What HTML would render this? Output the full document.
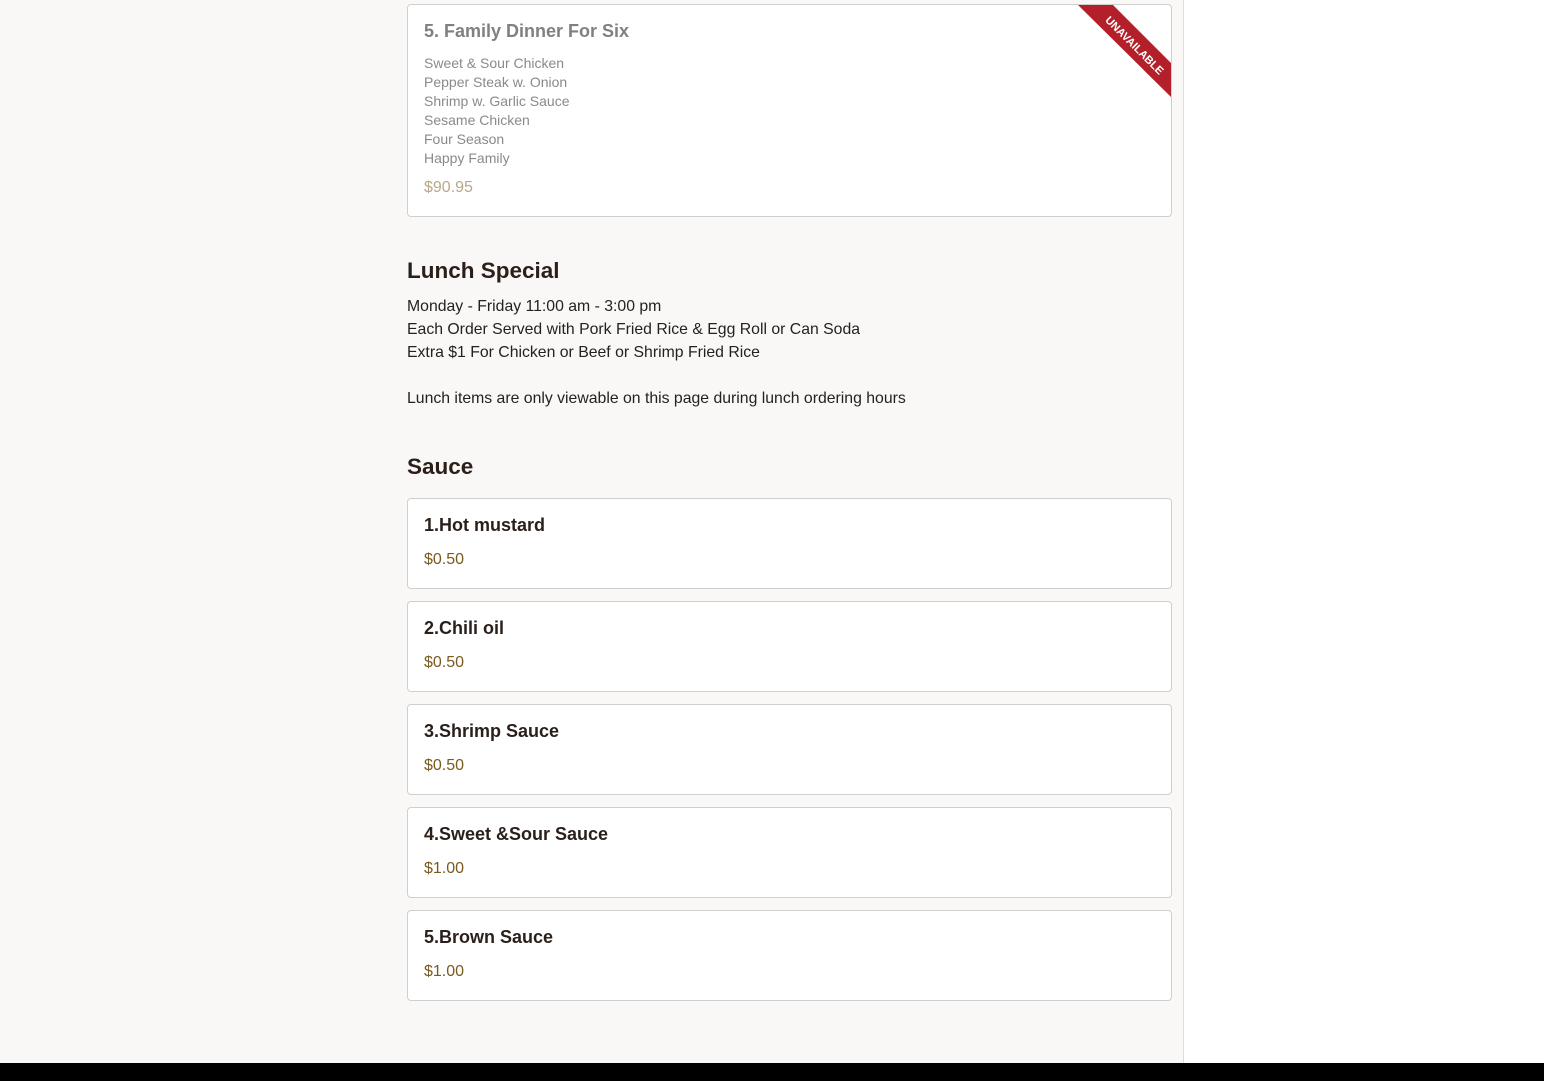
<!DOCTYPE html>
<html><head><meta charset="utf-8"><style>
body{margin:0;background:#f9f8f6;font-family:"Liberation Sans",sans-serif;width:1544px;height:1081px;position:relative;overflow:hidden;color:#2a1f1a}
.right{position:absolute;left:1183px;top:0;width:361px;height:1063px;background:#fff;border-left:1px solid #dcdcdc}
.foot{position:absolute;left:0;top:1063px;width:1544px;height:18px;background:#000}
.card{position:absolute;left:407px;width:763px;background:#fff;border:1px solid #cfcfcf;border-radius:4px;box-sizing:content-box}
.t{position:absolute;left:16px;font-size:18px;font-weight:bold}
.p{position:absolute;left:16px;font-size:16px;color:#7a5a1e}
h2{position:absolute;left:407px;margin:0;font-size:22.5px;font-weight:bold;color:#2a1f1a}
.l{position:absolute;left:407px;font-size:15.8px;color:#222}
.d{font-size:14px;color:#8a8a8a;line-height:19px}
</style></head><body>
<div class="right"></div>
<div class="card" style="top:4px;height:211px;overflow:hidden">
 <div class="t" style="top:16px;color:#808080">5. Family Dinner For Six</div>
 <div class="d" style="position:absolute;left:16px;top:49px">Sweet &amp; Sour Chicken<br>Pepper Steak w. Onion<br>Shrimp w. Garlic Sauce<br>Sesame Chicken<br>Four Season<br>Happy Family</div>
 <div class="p" style="top:174px;color:#b8a888">$90.95</div>
 <svg style="position:absolute;left:0;top:0" width="765" height="213"><polygon points="670,0 705,0 765,60 765,94" fill="#b4202a"/>
 <text x="0" y="0" transform="translate(726,41) rotate(45)" text-anchor="middle" dominant-baseline="middle" font-family="Liberation Sans" font-size="11" font-weight="bold" fill="#fff">UNAVAILABLE</text></svg>
</div>
<h2 style="top:258px">Lunch Special</h2>
<div class="l" style="top:295px;line-height:23px">Monday - Friday 11:00 am - 3:00 pm<br>Each Order Served with Pork Fried Rice &amp; Egg Roll or Can Soda<br>Extra $1 For Chicken or Beef or Shrimp Fried Rice<br><br>Lunch items are only viewable on this page during lunch ordering hours</div>
<h2 style="top:454px">Sauce</h2>
<div class="card" style="top:498px;height:89px"><div class="t" style="top:16px">1.Hot mustard</div><div class="p" style="top:52px">$0.50</div></div>
<div class="card" style="top:601px;height:89px"><div class="t" style="top:16px">2.Chili oil</div><div class="p" style="top:52px">$0.50</div></div>
<div class="card" style="top:704px;height:89px"><div class="t" style="top:16px">3.Shrimp Sauce</div><div class="p" style="top:52px">$0.50</div></div>
<div class="card" style="top:807px;height:89px"><div class="t" style="top:16px">4.Sweet &amp;Sour Sauce</div><div class="p" style="top:52px">$1.00</div></div>
<div class="card" style="top:910px;height:89px"><div class="t" style="top:16px">5.Brown Sauce</div><div class="p" style="top:52px">$1.00</div></div>
<div class="foot"></div>
</body></html>
